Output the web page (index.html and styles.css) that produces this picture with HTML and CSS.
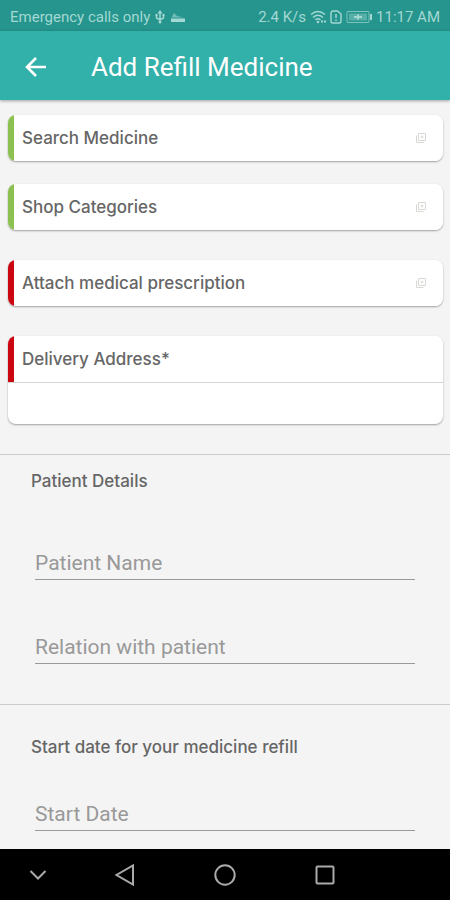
FILE: index.html
```html
<!DOCTYPE html>
<html lang="en">
<head>
<meta charset="utf-8">
<meta name="viewport" content="width=device-width, initial-scale=1">
<title>Add Refill Medicine</title>
<link rel="stylesheet" href="styles.css">
</head>
<body>
<svg class="sprite" aria-hidden="true">
  <symbol id="add-copy" viewBox="0 0 12 12">
    <path d="M3.500 1.500h7v7h-7zM1.500 3.500v7h7M7 3.500v3M5.500 5h3" fill="none" stroke="currentColor"/>
  </symbol>
</svg>
<div class="status">
  <div class="status-group">
    <span>Emergency calls only</span>
    <svg width="12" height="16" viewBox="0 0 12 16" aria-hidden="true"><path d="M6 3v9M2.500 6v3L6 11l3.500-2V6" fill="none" stroke="currentColor" stroke-width="1.500"/><path d="M3.500 4.500 6 1l2.500 3.500z" fill="currentColor"/><circle cx="6" cy="13" r="1.500" fill="currentColor"/><path d="M1.500 5h2v2h-2zM8.500 5h2v2h-2z" fill="currentColor"/></svg>
    <svg width="16" height="16" viewBox="0 0 16 16" aria-hidden="true"><path d="M1 9.500h14V13H1z" fill="currentColor"/><path d="M1.500 8.500 4 4l3 3 7 1.500z" fill="currentColor" opacity=".6"/></svg>
  </div>
  <div class="status-group">
    <span>2.4 K/s</span>
    <svg width="16" height="16" viewBox="0 0 16 16" aria-hidden="true"><path d="M1 5.500Q8-.5 15 5.500M3 8.500q5-4.500 10 0M5.500 11q2.500-2.500 5 0" fill="none" stroke="currentColor" stroke-width="1.500"/><circle cx="8" cy="13" r="1.300" fill="currentColor"/><path d="M11 12.500h2M14 12.500h2" stroke="currentColor" stroke-width="2"/></svg>
    <svg width="12" height="16" viewBox="0 0 12 16" aria-hidden="true"><path d="M3.500 2h4L11 5v7.500q0 1.500-1.500 1.500h-7Q1 14 1 12.500v-8Q1 2 3.500 2z" fill="none" stroke="currentColor" stroke-width="1.400"/><path d="M6 5v4M6 10.500v1.500" stroke="currentColor" stroke-width="1.500"/></svg>
    <svg width="26" height="16" viewBox="0 0 26 16" aria-hidden="true"><rect x="1" y="2.500" width="22" height="11" rx="1" fill="none" stroke="currentColor" opacity=".7"/><path d="M3 4.500h18v7H3z" fill="currentColor" opacity=".4"/><path d="M8 8h8M12 5.500v5" stroke="currentColor" stroke-width="2"/><path d="M25 5v6" stroke="currentColor" stroke-width="2"/></svg>
    <span>11:17 AM</span>
  </div>
</div>
<header class="appbar">
  <button class="back" type="button" aria-label="Back">
    <svg width="22" height="22" viewBox="0 0 22 22" aria-hidden="true"><path d="M21 11H2M11 2l-9 9 9 9" fill="none" stroke="currentColor" stroke-width="2.600"/></svg>
  </button>
  <h1>Add Refill Medicine</h1>
</header>
<main>
  <section class="cards">
    <div class="optional">
      <button class="card" type="button"><span>Search Medicine</span><svg class="add" aria-hidden="true"><use href="#add-copy"/></svg></button>
      <button class="card" type="button"><span>Shop Categories</span><svg class="add" aria-hidden="true"><use href="#add-copy"/></svg></button>
    </div>
    <button class="card required" type="button"><span>Attach medical prescription</span><svg class="add" aria-hidden="true"><use href="#add-copy"/></svg></button>
    <div class="address">
      <label class="card required" for="address">Delivery Address*</label>
      <input id="address" type="text">
    </div>
  </section>
  <section class="details">
    <h2>Patient Details</h2>
    <div class="fields">
      <input type="text" placeholder="Patient Name" aria-label="Patient Name">
      <input type="text" placeholder="Relation with patient" aria-label="Relation with patient">
    </div>
  </section>
  <section class="details start">
    <h2>Start date for your medicine refill</h2>
    <div class="fields">
      <input type="text" placeholder="Start Date" aria-label="Start Date">
    </div>
  </section>
</main>
<nav class="navbar" aria-label="System">
  <button type="button" aria-label="Hide"><svg width="24" height="24" viewBox="0 0 24 24" aria-hidden="true"><path d="m4.500 8 7.500 7.500L19.500 8"/></svg></button>
  <button type="button" aria-label="Back"><svg width="24" height="24" viewBox="0 0 24 24" aria-hidden="true"><path d="M20 2.500v19L3.500 12z"/></svg></button>
  <button type="button" aria-label="Home"><svg width="24" height="24" viewBox="0 0 24 24" aria-hidden="true"><circle cx="12" cy="12" r="9.700"/></svg></button>
  <button type="button" aria-label="Recent apps"><svg width="24" height="24" viewBox="0 0 24 24" aria-hidden="true"><rect x="3.500" y="3.500" width="17" height="17" rx="1"/></svg></button>
</nav>
</body>
</html>
```
FILE: styles.css
```css
* {
  box-sizing: border-box;
}

body {
  margin: 0;
  min-height: 100vh;
  display: flex;
  flex-direction: column;
  background: #f4f4f4;
  color: #666;
  font-family: Roboto, sans-serif;
}

button,
input {
  font: inherit;
  color: inherit;
  border: 0;
  padding: 0;
  background: none;
}

svg {
  display: block;
  flex: none;
}

.sprite {
  position: absolute;
  width: 0;
  height: 0;
}

.status {
  display: flex;
  justify-content: space-between;
  align-items: center;
  height: 31px;
  padding: 2px 10px 0;
  background: #25958d;
  color: #a3d8d3;
  font-size: 15px;
}

.status-group {
  display: flex;
  align-items: center;
  gap: 4px;
}

.appbar {
  position: relative;
  display: flex;
  align-items: center;
  gap: 44px;
  height: 69px;
  padding: 2px 25px 0;
  background: #32b0aa;
  color: #fff;
  box-shadow: 0 1px 3px rgba(0, 0, 0, 0.35);
}

h1 {
  margin: 0;
  font-size: 26px;
  font-weight: 400;
}

main {
  flex: 1;
}

.cards {
  display: grid;
  gap: 30px;
  padding: 15px 7px 30px 8px;
}

.optional {
  display: grid;
  gap: 23px;
}

.card {
  display: flex;
  align-items: center;
  justify-content: space-between;
  width: 100%;
  height: 46px;
  padding: 0 16px 0 14px;
  border-radius: 8px;
  background: linear-gradient(90deg, #8cc152 6px, #fff 6px);
  box-shadow: 0 1px 2px rgba(0, 0, 0, 0.35);
  font-family: Inter, sans-serif;
  font-size: 17px;
  font-weight: 500;
}

.required {
  background: linear-gradient(90deg, #cc0610 6px, #fff 6px);
}

.add {
  width: 12px;
  height: 12px;
  color: #d8d8d4;
}

.address {
  border-radius: 8px;
  background: #fff;
  box-shadow: 0 1px 2px rgba(0, 0, 0, 0.35);
}

.address .card {
  border-radius: 8px 8px 0 0;
  box-shadow: none;
}

.address input {
  display: block;
  width: 100%;
  height: 42px;
  padding: 0 14px;
  border-top: 1px solid #d4d4d4;
}

.details {
  padding: 16px 35px 40px;
  border-top: 1px solid #ccc;
}

h2 {
  margin: 0 0 0 -4px;
  font-family: Inter, sans-serif;
  font-size: 17px;
  font-weight: 500;
  line-height: 20px;
}

.fields {
  display: grid;
  gap: 44px;
  margin-top: 49px;
}

.fields input {
  width: 100%;
  height: 40px;
  padding-top: 6px;
  border-bottom: 1px solid #999;
  font-size: 21px;
}

.fields input::placeholder {
  color: #999;
  opacity: 1;
}

.start {
  padding-top: 32px;
  padding-bottom: 18px;
}

.start .fields {
  margin-top: 34px;
}

.navbar {
  display: grid;
  grid-template-columns: 3fr 4fr 4fr 4fr 3fr;
  align-items: center;
  justify-items: center;
  height: 51px;
  background: #000;
}

.navbar path,
.navbar circle,
.navbar rect {
  fill: none;
  stroke: #aaa;
  stroke-width: 2;
}
```
